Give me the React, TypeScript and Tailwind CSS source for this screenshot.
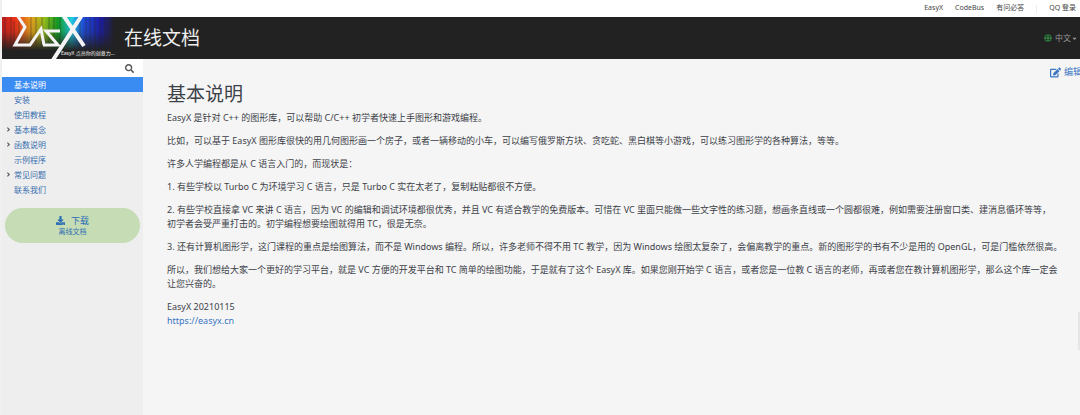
import { FaAngleRight, FaCaretDown, FaDownload, FaEdit, FaGlobe, FaSearch } from 'react-icons/fa';

interface NavItem {
    title: string;
    active?: boolean;
    children?: boolean;
}

const navItems: NavItem[] = [
    { title: '基本说明', active: true },
    { title: '安装' },
    { title: '使用教程' },
    { title: '基本概念', children: true },
    { title: '函数说明', children: true },
    { title: '示例程序' },
    { title: '常见问题', children: true },
    { title: '联系我们' },
];

function Logo() {
    return (
        <svg width="116" height="42" viewBox="0 0 116 42" role="img" aria-label="EasyX">
            <defs>
                <linearGradient id="spectrum" x1="0" x2="1" y1="0" y2="0">
                    <stop offset="0" stopColor="#c81c1c" />
                    <stop offset="0.12" stopColor="#f03418" />
                    <stop offset="0.25" stopColor="#e8a01c" />
                    <stop offset="0.36" stopColor="#9cc01c" />
                    <stop offset="0.48" stopColor="#10a020" />
                    <stop offset="0.6" stopColor="#20d0e8" />
                    <stop offset="0.7" stopColor="#2050e0" />
                    <stop offset="0.85" stopColor="#1c1ca8" />
                    <stop offset="0.97" stopColor="#222222" />
                </linearGradient>
                <linearGradient id="fade" x1="0" x2="0" y1="0" y2="1">
                    <stop offset="0" stopColor="#222222" stopOpacity="0" />
                    <stop offset="0.35" stopColor="#222222" stopOpacity="0.15" />
                    <stop offset="0.8" stopColor="#222222" stopOpacity="1" />
                </linearGradient>
            </defs>
            <rect width="116" height="42" fill="url(#spectrum)" />
            <path d="M3 0V42M9 0V42M12 4V42M17 0V42M29 0V42M34 0V42M40 0V42M47 0V42M52 0V42M58 0V42M78 0V42M84 0V42M88 0V42M93 0V42M98 0V42M103 0V42" stroke="#222222" strokeOpacity="0.4" />
            <rect width="116" height="42" fill="url(#fade)" />
            <path d="M15 -2L23 10L13 28H28L39 12L42 28M58 14H44L56 28H41" fill="none" stroke="#f4f4f4" strokeWidth="3" />
            <path d="M61 -2L82 29M80 -2L51 43" fill="none" stroke="#f4f4f4" strokeWidth="4" />
            <text x="59" y="38" fill="#f4f4f4" fontSize="5" fontFamily="Noto Sans, Noto Sans CJK SC, sans-serif">EasyX 点亮你的创意力...</text>
        </svg>
    );
}

function Sidebar() {
    return (
        <aside className="w-[141px] shrink-0 bg-[#eeeeee]">
            <form className="flex h-[18px] items-center bg-white pr-[9px]">
                <input type="text" aria-label="搜索" className="min-w-0 flex-1 px-2 outline-none" />
                <button type="submit" aria-label="搜索" className="text-[#555555]">
                    <FaSearch size={9} />
                </button>
            </form>
            <nav className="text-[8px] leading-[15px] text-[#3a70b0]">
                {navItems.map((item) => (
                    <a
                        key={item.title}
                        href="#"
                        className={item.active ? 'flex items-center bg-[#3b8cf2] text-white' : 'flex items-center'}
                    >
                        <span className="w-3 pl-[3px] text-[#555555]">
                            {item.children && <FaAngleRight size={7} />}
                        </span>
                        {item.title}
                    </a>
                ))}
            </nav>
            <a
                href="#"
                className="mx-[3px] mt-[11px] flex h-[35px] flex-col items-center justify-center rounded-full bg-[#c5dcb5] text-[#2f6fb3]"
            >
                <span className="flex items-center gap-[6px] text-[9px] leading-[13px]">
                    <FaDownload size={9} />
                    下载
                </span>
                <span className="text-[7px] leading-[10px]">离线文档</span>
            </a>
        </aside>
    );
}

export default function App() {
    return (
        <div className="relative flex min-h-screen flex-col overflow-hidden border-l-2 border-[#f0f0f0] bg-white font-['Noto_Sans','Noto_Sans_CJK_SC',sans-serif] text-[#3c4148]">
            <div className="flex h-[17px] items-center justify-end gap-3 pr-1 text-[7px] text-[#444444]">
                <a href="#">EasyX</a>
                <a href="#">CodeBus</a>
                <a href="#">有问必答</a>
                <span className="h-2 w-px bg-[#eeeeee]" />
                <a href="#">QQ 登录</a>
            </div>
            <header className="flex h-[42px] items-center bg-[#222222]">
                <Logo />
                <span className="ml-[6px] text-[19px] text-[#eeeeee]">在线文档</span>
                <button type="button" className="mr-[2px] ml-auto flex items-center text-[8px] text-[#999999]">
                    <FaGlobe size={8} className="mr-[3px] text-[#2f8540]" />
                    中文
                    <FaCaretDown size={7} />
                </button>
            </header>
            <div className="flex flex-1">
                <Sidebar />
                <main className="relative min-w-0 flex-1 bg-[#f5f5f5] pt-[22px] pl-6 text-[9px] leading-[14px]">
                    <a href="#" className="absolute top-[6px] -right-[2px] flex items-center gap-[3px] text-[#3a76c4]">
                        <FaEdit size={11} />
                        编辑
                    </a>
                    <h1 className="mb-[3px] text-[19px] leading-[27px]">基本说明</h1>
                    <div className="flex flex-col gap-[9px]">
                        <p>EasyX 是针对 C++ 的图形库，可以帮助 C/C++ 初学者快速上手图形和游戏编程。</p>
                        <p>
                            比如，可以基于 EasyX 图形库很快的用几何图形画一个房子，或者一辆移动的小车，可以编写俄罗斯方块、贪吃蛇、黑白棋等小游戏，可以练习图形学的各种算法，等等。
                        </p>
                        <p>许多人学编程都是从 C 语言入门的，而现状是：</p>
                        <p>1. 有些学校以 Turbo C 为环境学习 C 语言，只是 Turbo C 实在太老了，复制粘贴都很不方便。</p>
                        <p>
                            2. 有些学校直接拿 VC 来讲 C 语言，因为 VC 的编辑和调试环境都很优秀，并且 VC 有适合教学的免费版本。可惜在 VC 里面只能做一些文字性的练习题，想画条直线或一个圆都很难，例如需要注册窗口类、建消息循环等等，
                            <br />
                            初学者会受严重打击的。初学编程想要绘图就得用 TC，很是无奈。
                        </p>
                        <p>
                            3. 还有计算机图形学，这门课程的重点是绘图算法，而不是 Windows 编程。所以，许多老师不得不用 TC 教学，因为 Windows 绘图太复杂了，会偏离教学的重点。新的图形学的书有不少是用的 OpenGL，可是门槛依然很高。
                        </p>
                        <p>
                            所以，我们想给大家一个更好的学习平台，就是 VC 方便的开发平台和 TC 简单的绘图功能，于是就有了这个 EasyX 库。如果您刚开始学 C 语言，或者您是一位教 C 语言的老师，再或者您在教计算机图形学，那么这个库一定会
                            <br />
                            让您兴奋的。
                        </p>
                        <p>
                            EasyX 20210115
                            <br />
                            <a href="https://easyx.cn" className="text-[#3a76c4]">https://easyx.cn</a>
                        </p>
                    </div>
                </main>
            </div>
            <div className="absolute top-[312px] right-0 h-[38px] w-[2px] bg-[#e6e6e6]" />
        </div>
    );
}
